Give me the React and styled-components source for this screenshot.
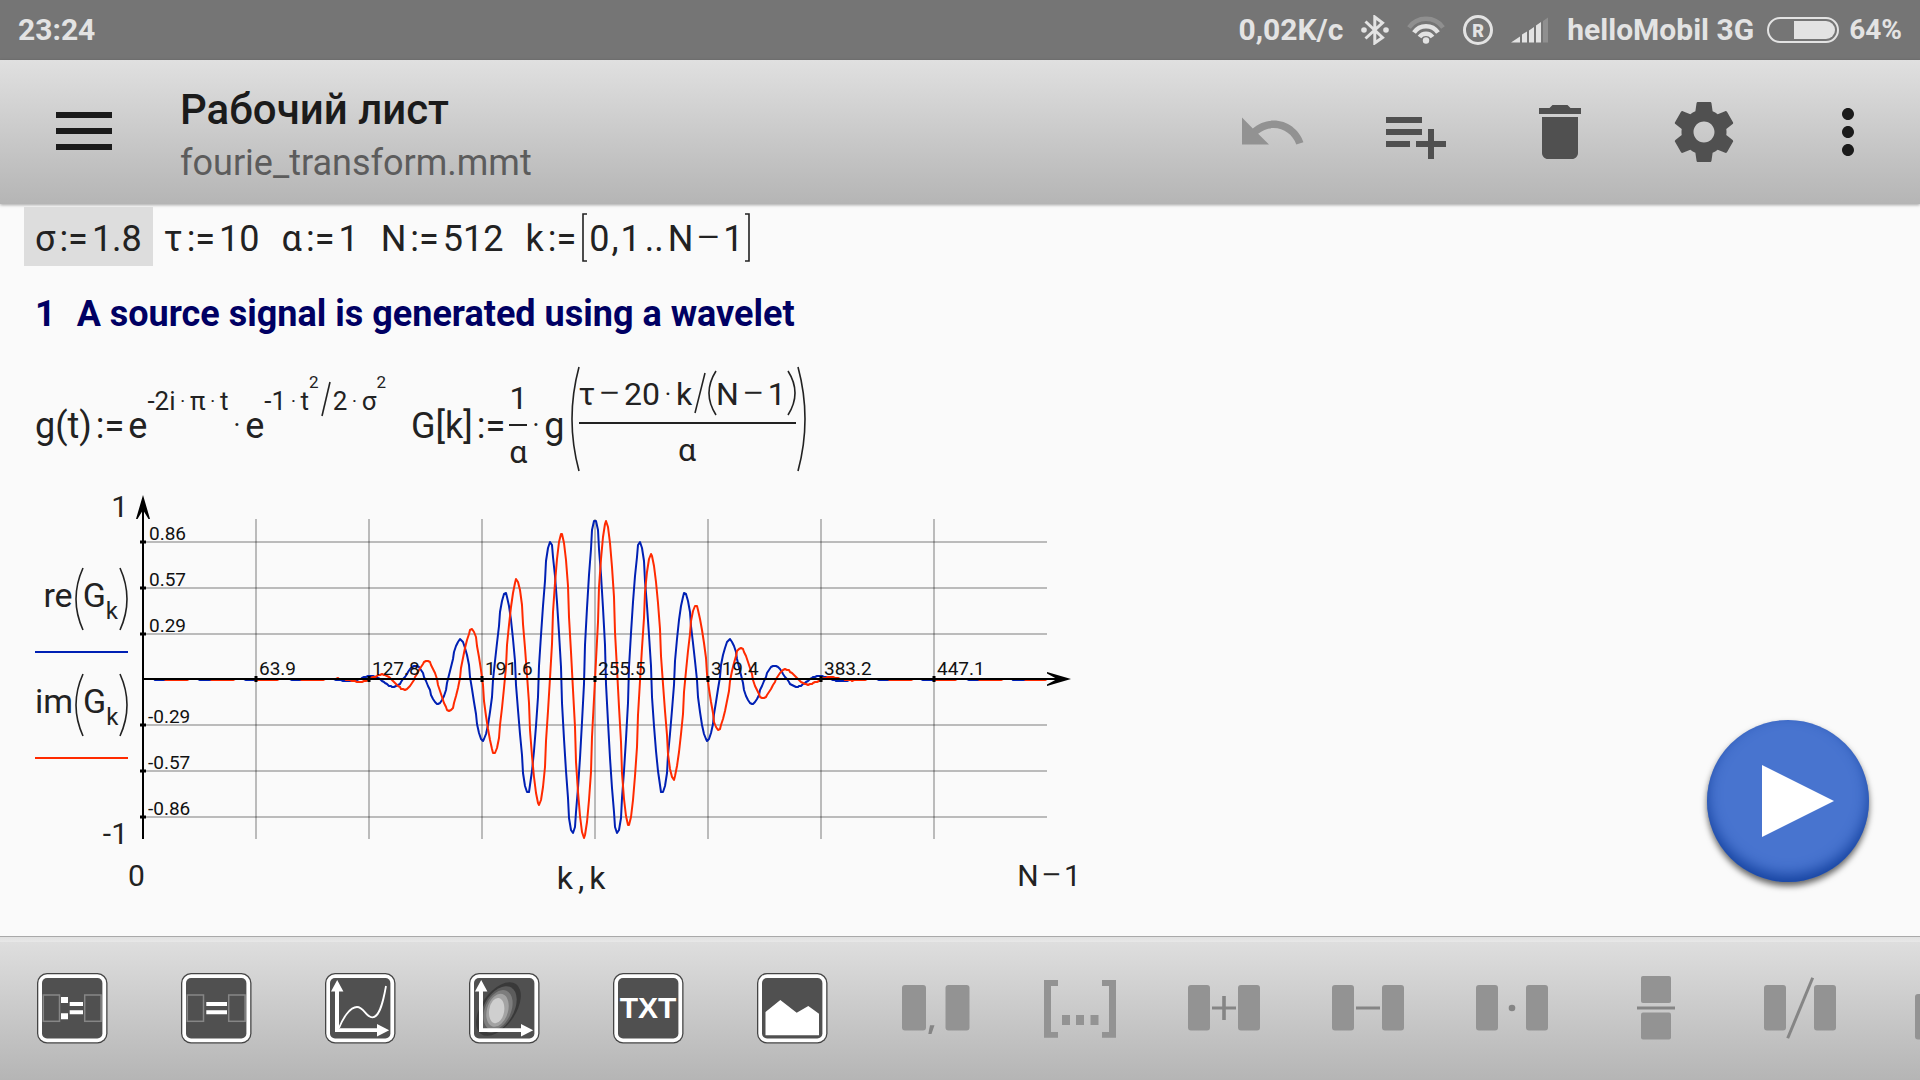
import React from "react";
import styled, { createGlobalStyle } from "styled-components";

const GlobalStyle = createGlobalStyle`
  *, *::before, *::after { box-sizing: border-box; }
  body { margin: 0; background: #fafafa; }
`;

const Screen = styled.div`
  display: flex;
  flex-direction: column;
  min-height: 100vh;
  overflow: hidden;
  font-family: Roboto, "Noto Sans", sans-serif;
  color: #222;
`;

/* ---------- status bar ---------- */

const StatusBar = styled.div`
  display: flex;
  align-items: center;
  justify-content: space-between;
  height: 60px;
  padding: 0 18px;
  background: #757575;
  color: #e3e3e3;
  font-size: 30px;
  font-weight: 700;
  line-height: 60px;
`;

const StatusGroup = styled.div`
  display: flex;
  align-items: center;
  gap: ${(p) => p.$gap}px;
`;

const Percent = styled.span`
  font-size: 28px;
`;

const StatusIcon = styled.svg`
  display: block;
  flex: none;
`;

/* ---------- app bar ---------- */

const AppBar = styled.header`
  display: flex;
  align-items: center;
  height: 144px;
  background: linear-gradient(#e0e0e0, #b5b5b5);
  box-shadow: 0 1px 3px rgba(0, 0, 0, 0.35);
`;

const IconButton = styled.button`
  display: flex;
  flex: none;
  align-items: center;
  justify-content: center;
  width: 144px;
  height: 144px;
  padding: 0;
  border: 0;
  background: none;
  color: ${(p) => (p.$strong ? "#1b1b1b" : "#505050")};
  &:disabled { color: #929292; }
`;

const MenuButton = styled(IconButton)`
  width: 168px;
  padding-bottom: 2px;
`;

const Titles = styled.div`
  flex: 1;
  padding: 8px 0 0 12px;
`;

const Title = styled.h1`
  margin: 0;
  font-size: 42px;
  font-weight: 500;
  line-height: 54px;
  color: #1b1b1b;
`;

const Subtitle = styled.p`
  margin: 0;
  font-size: 36px;
  line-height: 52px;
  color: #5c5c5c;
`;

/* ---------- worksheet ---------- */

const Sheet = styled.main`
  position: relative;
  flex: 1;
  padding: 1px 24px 0;
`;

const FormulaRow = styled.div`
  display: flex;
  align-items: baseline;
  white-space: nowrap;
`;

const Cell = styled.div`
  padding: 9px 11px 3px;
  font-size: 36px;
  line-height: 47px;
  background: ${(p) => (p.$selected ? "#dddddd" : "transparent")};
`;

const Heading = styled.h2`
  display: flex;
  gap: 21px;
  margin: 27px 0 32px;
  padding: 0 11px;
  font-size: 36px;
  font-weight: 700;
  line-height: 42px;
  color: #000063;
`;

const Equations = styled(FormulaRow)`
  gap: 25px;
  padding: 0 11px;
  font-size: 36px;
  line-height: 42px;
`;

const Assign = styled.span`
  margin: 0 4px;
`;

const Operator = styled.span`
  margin: 0 ${(p) => p.$gap || 4}px;
  font-weight: ${(p) => (p.$regular ? 400 : 300)};
`;

const MinusSign = styled.span`
  margin: 0 ${(p) => p.$gap || 2}px;
  font-size: 1.25em;
  font-weight: 300;
  line-height: 0;
  vertical-align: -2px;
`;

const Minus = ({ gap }) => <MinusSign $gap={gap}>−</MinusSign>;

const Raised = styled.span`
  font-size: ${(p) => p.$size}px;
  line-height: ${(p) => p.$size}px;
  vertical-align: ${(p) => p.$by}px;
`;

const Fence = styled.svg`
  display: inline-block;
  width: ${(p) => p.$w || 8}px;
  height: ${(p) => (p.$h ? p.$h + "px" : "auto")};
  margin-left: 2px;
  margin-right: ${(p) => p.$after || 0}px;
  vertical-align: ${(p) => p.$drop || 0}px;
  overflow: visible;
  fill: none;
  stroke: #222;
  stroke-width: 1.6;
  path { vector-effect: non-scaling-stroke; }
`;

const Fraction = styled.span`
  display: inline-flex;
  flex-direction: column;
  align-items: stretch;
  gap: 7px;
  vertical-align: 29px;
  font-size: 32px;
  line-height: 38px;
  text-align: center;
`;

const FractionBar = styled.span`
  height: 2px;
  background: #222;
`;

const Group = styled.span`
  display: inline-flex;
  align-items: stretch;
  margin-left: 4px;
  vertical-align: 33px;
  ${Fraction} { align-self: baseline; padding: 4px 0 2px; }
`;

const FENCES = {
  "(": "M8 0 Q-6 50 8 100",
  ")": "M0 0 Q14 50 0 100",
  "[": "M5 0 H1 V100 H5",
  "]": "M0 0 H4 V100 H0",
};

function Paren({ kind, h, w = 8, drop, after }) {
  return (
    <Fence
      $h={h}
      $w={w}
      $drop={drop}
      $after={after}
      viewBox={kind === "[" || kind === "]" ? "0 0 5 100" : "0 0 8 100"}
      preserveAspectRatio="none"
      aria-hidden="true"
    >
      <path d={FENCES[kind]} />
    </Fence>
  );
}

/* ---------- plot ---------- */

const Figure = styled.figure`
  display: grid;
  grid-template-columns: 93px 944px;
  column-gap: 9px;
  width: max-content;
  margin: 24px 0 0 11px;
`;

const YLabels = styled.div`
  display: flex;
  flex-direction: column;
  align-items: flex-end;
  font-size: 34px;
  line-height: 38px;
`;

const Bound = styled.span`
  font-size: 30px;
  line-height: 24px;
`;

const Legend = styled.div`
  display: flex;
  flex-direction: column;
  gap: 21px;
  width: 100%;
  margin: 49px 0 63px;
`;

const Series = styled.div`
  padding-bottom: 21px;
  border-bottom: 2px solid ${(p) => p.$color};
  text-align: right;
  white-space: nowrap;
`;

const XLabels = styled.figcaption`
  display: flex;
  grid-column: 1 / -1;
  align-items: flex-start;
  justify-content: space-between;
  margin-top: 12px;
  padding-left: 93px;
  font-size: 30px;
  line-height: 36px;
`;

const Variables = styled.span`
  display: flex;
  gap: 5px;
  font-size: 32px;
  line-height: 40px;
`;

const Plot = styled.svg`
  display: block;
  overflow: visible;
  text {
    font-family: Roboto, sans-serif;
    font-size: 19px;
    fill: #111;
  }
`;

const AXIS_X = 6;
const STEP_X = 113;
const WIDTH = 904;
const TOP = 24;
const HALF = 160;
const X_TICKS = ["63.9", "127.8", "191.6", "255.5", "319.4", "383.2", "447.1"];
const Y_TICKS = ["0.86", "0.57", "0.29", "-0.29", "-0.57", "-0.86"];
const Y_LINES = [47, 93, 139, 230, 276, 322];

function wave(fn) {
  let d = "";
  for (let k = 0; k < 512; k += 1) {
    const t = 10 - (20 * k) / 511;
    const v = fn(2 * Math.PI * t) * Math.exp((-t * t) / (2 * 1.8 * 1.8));
    const x = AXIS_X + Math.round((k * WIDTH) / 511);
    const y = TOP + Math.ceil(HALF - HALF * v);
    d += `${k ? "L" : "M"}${x} ${y}`;
  }
  return d;
}

const RE = wave((a) => Math.cos(a));
const IM = wave((a) => -Math.sin(a));

function WaveletPlot() {
  const axisY = TOP + HALF;
  return (
    <Plot width="944" height="345" viewBox="0 0 944 345" role="img" aria-label="re(G), im(G)">
      <g stroke="#000" strokeOpacity="0.25" strokeWidth="2">
        {Y_LINES.map((y) => (
          <path key={y} d={`M${AXIS_X} ${y}H${AXIS_X + WIDTH}`} />
        ))}
        {X_TICKS.map((t, i) => (
          <path key={t} d={`M${AXIS_X + STEP_X * (i + 1)} ${TOP}V${TOP + 2 * HALF}`} />
        ))}
      </g>
      <g fill="none" strokeWidth="2" strokeLinejoin="round">
        <path d={RE} stroke="#0020b4" />
        <path d={IM} stroke="#ff2a00" />
      </g>
      <g stroke="#000" strokeWidth="2">
        <path d={`M${AXIS_X} 4V${TOP + 2 * HALF}`} />
        <path d={`M${AXIS_X} ${axisY}H928`} />
      </g>
      <path d="M6 0L13 24H11.5L6 15L0.5 24H-1Z" />
      <path d="M934 184L910 191V189.5L920 184L910 178.5V177Z" />
      {Y_LINES.map((y) => (
        <rect key={y} x={AXIS_X - 3} y={y - 1.5} width="6" height="3" />
      ))}
      {X_TICKS.map((t, i) => (
        <g key={t}>
          <rect x={AXIS_X + STEP_X * (i + 1) - 1.5} y={axisY - 3} width="3" height="6" />
          <text x={AXIS_X + STEP_X * (i + 1) + 3} y={axisY - 4}>{t}</text>
        </g>
      ))}
      {Y_TICKS.map((t, i) => (
        <text key={t} x={AXIS_X + (i < 3 ? 6 : 5)} y={Y_LINES[i] - 2}>{t}</text>
      ))}
    </Plot>
  );
}

/* ---------- floating button ---------- */

const RunButton = styled.button`
  position: absolute;
  right: 51px;
  bottom: 54px;
  display: flex;
  align-items: center;
  justify-content: center;
  width: 162px;
  height: 162px;
  padding: 0 0 0 20px;
  border: 0;
  border-radius: 50%;
  background: #4874cf;
  box-shadow: inset 0 -7px 14px #1643a0, 0 4px 6px rgba(0, 0, 0, 0.6);
`;

/* ---------- bottom toolbar ---------- */

const Toolbar = styled.nav`
  display: flex;
  flex: none;
  height: 144px;
  overflow: hidden;
  background: linear-gradient(#a9a9a9 0, #a9a9a9 1px, #e0e0e0 1px, #e8e8e8 6px, #dedede 6px, #b5b5b5 100%);
`;

const Tile = ({ children }) => (
  <svg width="72" height="72" viewBox="0 0 72 72" aria-hidden="true">
    <rect x="1" y="1" width="70.5" height="70.5" rx="10" fill="#454545" />
    <rect x="2.3" y="2.3" width="67.9" height="67.9" rx="8.8" fill="#fff" />
    <rect x="6" y="6" width="60.4" height="60.4" rx="5" fill="#505050" />
    {children}
  </svg>
);

const Glyph = ({ children }) => (
  <svg width="72" height="72" viewBox="0 0 72 72" fill="#939393" aria-hidden="true">
    {children}
  </svg>
);

const Slots = () => (
  <g fill="none" stroke="#868686" strokeWidth="1.5">
    <rect x="7.3" y="23" width="16.2" height="26.3" />
    <rect x="48.7" y="23" width="16.4" height="26.3" />
  </g>
);

const Axes = () => (
  <g fill="#fff">
    <path d="M11 60V19.5H7L13.2 8L19.4 19.5H15V56.3H53V52L65.2 58.2L53 64.4V60Z" />
  </g>
);

const Blocks = ({ children }) => (
  <Glyph>
    <rect y="13" width="22" height="45.5" rx="3" />
    <rect x="50" y="13" width="22" height="45.5" rx="3" />
    {children}
  </Glyph>
);

const TOOLS = [
  {
    label: "Assign",
    icon: (
      <Tile>
        <Slots />
        <path fill="#fff" d="M25 25h7v6h-7zM25 41.3h7v6h-7zM33.7 30H47v4H33.7zM33.7 38.3H47v4H33.7z" />
      </Tile>
    ),
  },
  {
    label: "Result",
    icon: (
      <Tile>
        <Slots />
        <path fill="#fff" d="M26.3 30H47v4H26.3zM26.3 38.3H47v4H26.3z" />
      </Tile>
    ),
  },
  {
    label: "Plot",
    icon: (
      <Tile>
        <Axes />
        <path
          fill="none"
          stroke="#fff"
          strokeWidth="1.8"
          d="M15 56C19 46 26 35 33 35C40 35 42 45.3 48.5 45.3C56 45.3 59.5 28 62 14"
        />
      </Tile>
    ),
  },
  {
    label: "Contour plot",
    icon: (
      <Tile>
        <ellipse cx="30.5" cy="37" rx="17" ry="30.5" transform="rotate(35 30.5 37)" fill="#393939" />
        <ellipse cx="30.5" cy="37.5" rx="15" ry="25.5" transform="rotate(30 30.5 37.5)" fill="#5c5c5c" />
        <ellipse cx="30" cy="38" rx="13" ry="21" transform="rotate(24 30 38)" fill="#7d7d7d" />
        <ellipse cx="29.5" cy="38.3" rx="10.5" ry="17" transform="rotate(17 29.5 38.3)" fill="#a3a3a3" />
        <ellipse cx="28.7" cy="38.6" rx="7.5" ry="12.8" transform="rotate(9 28.7 38.6)" fill="#cfcfcf" />
        <Axes />
      </Tile>
    ),
  },
  {
    label: "Text",
    icon: (
      <Tile>
        <text
          x="36"
          y="46"
          textAnchor="middle"
          fontFamily="Liberation Sans, Arial, sans-serif"
          fontSize="30"
          fontWeight="700"
          fill="#fff"
        >
          TXT
        </text>
      </Tile>
    ),
  },
  {
    label: "Image",
    icon: (
      <Tile>
        <path fill="#fff" d="M9.5 63.3V40L24.3 28L40.7 40.7L52.3 34L63 41.7V63.3Z" />
      </Tile>
    ),
  },
  {
    label: "List separator",
    off: true,
    icon: (
      <Glyph>
        <rect x="2" y="13" width="24" height="45.5" rx="3" />
        <rect x="45.5" y="13" width="24" height="45.5" rx="3" />
        <path fill="#858585" d="M30 53.3h4.5L31.5 62h-3.2z" />
      </Glyph>
    ),
  },
  {
    label: "Interval",
    off: true,
    icon: (
      <Glyph>
        <path d="M0 8H14V14H7V60H14V65.7H0ZM72 8H58V14H65V60H58V65.7H72Z" />
        <path d="M18 43h8v10h-8zM32 43h8v10h-8zM46.5 43h8v10h-8z" />
      </Glyph>
    ),
  },
  {
    label: "Add",
    off: true,
    icon: (
      <Blocks>
        <path fill="#858585" d="M24 34.5H34.2V24H37.8V34.5H48V37.5H37.8V48H34.2V37.5H24Z" />
      </Blocks>
    ),
  },
  {
    label: "Subtract",
    off: true,
    icon: (
      <Blocks>
        <path fill="#858585" d="M24 34.5H48V37.5H24Z" />
      </Blocks>
    ),
  },
  {
    label: "Multiply",
    off: true,
    icon: (
      <Blocks>
        <circle fill="#858585" cx="36" cy="36" r="3.3" />
      </Blocks>
    ),
  },
  {
    label: "Fraction",
    off: true,
    icon: (
      <Glyph>
        <rect x="21" y="4" width="30" height="27" rx="2" />
        <rect x="21" y="40.5" width="30" height="27" rx="2" />
        <path fill="#858585" d="M17 34.5H55V37.5H17Z" />
      </Glyph>
    ),
  },
  {
    label: "Divide",
    off: true,
    icon: (
      <Blocks>
        <path stroke="#858585" strokeWidth="3" d="M23.7 66.3L48.7 5.7" />
      </Blocks>
    ),
  },
  {
    label: "Brackets",
    off: true,
    icon: (
      <Glyph>
        <rect x="7" y="22" width="22" height="45.5" rx="3" />
      </Glyph>
    ),
  },
];

const ActionIcon = ({ d }) => (
  <svg width="72" height="72" viewBox="0 0 24 24" fill="currentColor" aria-hidden="true">
    <path d={d} />
  </svg>
);

export default function App() {
  return (
    <Screen>
      <GlobalStyle />
      <StatusBar>
        <span>23:24</span>
        <StatusGroup $gap={18}>
          <span>0,02K/c</span>
          <StatusIcon width="28" height="30" viewBox="0 0 28 30" aria-label="Bluetooth">
            <path
              fill="none"
              stroke="#e3e3e3"
              strokeWidth="3"
              d="M4.5 6.5L21.5 22.5L13.8 28V2L21.5 7.8L4.5 23.5"
            />
            <circle cx="3" cy="15" r="2.8" fill="#e3e3e3" />
            <circle cx="25" cy="15" r="2.8" fill="#e3e3e3" />
          </StatusIcon>
          <StatusIcon width="38" height="30" viewBox="0 0 38 30" fill="none" strokeWidth="4.5" aria-label="Wi-Fi">
            <path stroke="#8f8f8f" d="M2 12.5A21 21 0 0 1 36 12.5" />
            <path stroke="#e3e3e3" d="M7 17.5A14.5 14.5 0 0 1 31 17.5" />
            <path stroke="#e3e3e3" d="M12.5 22A8 8 0 0 1 25.5 22" />
            <circle cx="19" cy="25.5" r="3.2" fill="#e3e3e3" />
          </StatusIcon>
          <StatusIcon width="30" height="30" viewBox="0 0 30 30" aria-label="Roaming">
            <circle cx="15" cy="15" r="13.5" fill="none" stroke="#e3e3e3" strokeWidth="3" />
            <text
              x="15"
              y="21.5"
              textAnchor="middle"
              fontFamily="Roboto, sans-serif"
              fontSize="18"
              fontWeight="900"
              fill="#e3e3e3"
            >
              R
            </text>
          </StatusIcon>
          <StatusIcon width="38" height="26" viewBox="0 0 38 26" aria-label="Signal">
            <path fill="#e3e3e3" d="M0 25.5L9 19.5V25.5ZM11 25.5V17.5L16 14.5V25.5ZM18 25.5V13.5L23 10V25.5ZM25 25.5V8.5L30 5V25.5Z" />
            <path fill="#8f8f8f" d="M32 25.5V4L37 0.5V25.5Z" />
          </StatusIcon>
          <StatusGroup $gap={13}>
            <span>helloMobil 3G</span>
            <StatusGroup $gap={10}>
              <StatusIcon width="72" height="26" viewBox="0 0 72 26" aria-label="Battery">
                <rect x="1" y="1" width="70" height="24" rx="12" fill="none" stroke="#e3e3e3" strokeWidth="2" />
                <path fill="#e3e3e3" d="M27 4H59A9 9 0 0 1 59 22H27Z" />
              </StatusIcon>
              <Percent>64%</Percent>
            </StatusGroup>
          </StatusGroup>
        </StatusGroup>
      </StatusBar>

      <AppBar>
        <MenuButton $strong aria-label="Меню">
          <svg width="56" height="38" viewBox="0 0 56 38" fill="currentColor" aria-hidden="true">
            <path d="M0 0H56V6H0ZM0 16H56V22H0ZM0 32H56V38H0Z" />
          </svg>
        </MenuButton>
        <Titles>
          <Title>Рабочий лист</Title>
          <Subtitle>fourie_transform.mmt</Subtitle>
        </Titles>
        <IconButton disabled aria-label="Undo">
          <ActionIcon d="M12.5 8.2c-2.65 0-5.05.99-6.9 2.6L2 7.2v9h9l-3.62-3.62c1.39-1.16 3.16-1.88 5.12-1.88 3.54 0 6.55 2.31 7.6 5.5l2.37-.78C21.08 11.23 17.15 8.2 12.5 8.2z" />
        </IconButton>
        <IconButton aria-label="Add element">
          <ActionIcon d="M14 11H2v2h12v-2zm0-4H2v2h12V7zm4 8v-4h-2v4h-4v2h4v4h2v-4h4v-2h-4zM2 17h8v-2H2v2z" />
        </IconButton>
        <IconButton aria-label="Delete">
          <ActionIcon d="M6 19c0 1.1.9 2 2 2h8c1.1 0 2-.9 2-2V7H6v12zM19 4h-3.5l-1-1h-5l-1 1H5v2h14V4z" />
        </IconButton>
        <IconButton aria-label="Settings">
          <ActionIcon d="M19.43 12.98c.04-.32.07-.64.07-.98s-.03-.66-.07-.98l2.11-1.65c.19-.15.24-.42.12-.64l-2-3.46c-.12-.22-.39-.3-.61-.22l-2.49 1c-.52-.4-1.08-.73-1.69-.98l-.38-2.65C14.46 2.18 14.25 2 14 2h-4c-.25 0-.46.18-.49.42l-.38 2.65c-.61.25-1.17.59-1.69.98l-2.49-1c-.23-.09-.49 0-.61.22l-2 3.46c-.13.22-.07.49.12.64l2.11 1.65c-.04.32-.07.65-.07.98s.03.66.07.98l-2.11 1.65c-.19.15-.24.42-.12.64l2 3.46c.12.22.39.3.61.22l2.49-1c.52.4 1.08.73 1.69.98l.38 2.65c.03.24.24.42.49.42h4c.25 0 .46-.18.49-.42l.38-2.65c.61-.25 1.17-.59 1.69-.98l2.49 1c.23.09.49 0 .61-.22l2-3.46c.12-.22.07-.49-.12-.64l-2.11-1.65zM12 15.5c-1.93 0-3.5-1.57-3.5-3.5s1.57-3.5 3.5-3.5 3.5 1.57 3.5 3.5-1.57 3.5-3.5 3.5z" />
        </IconButton>
        <IconButton $strong aria-label="More">
          <ActionIcon d="M12 8c1.1 0 2-.9 2-2s-.9-2-2-2-2 .9-2 2 .9 2 2 2zm0 2c-1.1 0-2 .9-2 2s.9 2 2 2 2-.9 2-2-.9-2-2-2zm0 6c-1.1 0-2 .9-2 2s.9 2 2 2 2-.9 2-2-.9-2-2-2z" />
        </IconButton>
      </AppBar>

      <Sheet>
        <FormulaRow>
          <Cell $selected>
            σ<Assign>:=</Assign>1.8
          </Cell>
          <Cell>
            τ<Assign>:=</Assign>10
          </Cell>
          <Cell>
            α<Assign>:=</Assign>1
          </Cell>
          <Cell>
            N<Assign>:=</Assign>512
          </Cell>
          <Cell>
            k<Assign>:=</Assign>
            <Paren kind="[" w={5} h={47} drop={-10} after={2} />
            0<Operator $regular $gap={2}>,</Operator>1
            <Operator $regular>..</Operator>N
            <Minus />1
            <Paren kind="]" w={5} h={47} drop={-10} />
          </Cell>
        </FormulaRow>

        <Heading>
          <span>1</span>
          <span>A source signal is generated using a wavelet</span>
        </Heading>

        <Equations>
          <span>
            g(t)<Assign>:=</Assign>e
            <Raised $size={26} $by={28}>
              -2i<Operator>·</Operator>π<Operator>·</Operator>t
            </Raised>
            <Operator>·</Operator>e
            <Raised $size={26} $by={28}>
              -1<Operator>·</Operator>t
              <Raised $size={17} $by={22}>2</Raised>
              <Fence $w={10} $h={34} $drop={-6} $after={2} viewBox="0 0 10 34" aria-hidden="true">
                <path d="M1 34L9 0" />
              </Fence>
              2<Operator>·</Operator>σ
              <Raised $size={17} $by={22}>2</Raised>
            </Raised>
          </span>
          <span>
            G[k]<Assign>:=</Assign>
            <Fraction>
              <span>1</span>
              <FractionBar />
              <span>α</span>
            </Fraction>
            <Operator>·</Operator>g
            <Group>
              <Paren kind="(" />
              <Fraction>
                <span>
                  τ<Minus gap={3} />20<Operator>·</Operator>k
                  <Fence $w={12} $h={40} $drop={-8} viewBox="0 0 12 40" aria-hidden="true">
                    <path d="M1 40L11 0" />
                  </Fence>
                  <Paren kind="(" h={44} drop={-10} />
                  N<Minus gap={3} />1
                  <Paren kind=")" h={44} drop={-10} />
                </span>
                <FractionBar />
                <span>α</span>
              </Fraction>
              <Paren kind=")" />
            </Group>
          </span>
        </Equations>

        <Figure>
          <YLabels>
            <Bound>1</Bound>
            <Legend>
              <Series $color="#0020b4">
                re
                <Paren kind="(" h={62} drop={-23} />
                G<Raised $size={24} $by={-12}>k</Raised>
                <Paren kind=")" h={62} drop={-23} />
              </Series>
              <Series $color="#ff2a00">
                im
                <Paren kind="(" h={62} drop={-23} />
                G<Raised $size={24} $by={-12}>k</Raised>
                <Paren kind=")" h={62} drop={-23} />
              </Series>
            </Legend>
            <Bound>-1</Bound>
          </YLabels>
          <WaveletPlot />
          <XLabels>
            <span>0</span>
            <Variables>
              <span>k</span>
              <span>,</span>
              <span>k</span>
            </Variables>
            <span>
              N<Minus />1
            </span>
          </XLabels>
        </Figure>

        <RunButton aria-label="Run">
          <svg width="72" height="72" viewBox="0 0 72 72" fill="#fff" aria-hidden="true">
            <path d="M0 0L72 36L0 72Z" />
          </svg>
        </RunButton>
      </Sheet>

      <Toolbar>
        {TOOLS.map((tool) => (
          <IconButton key={tool.label} disabled={tool.off} aria-label={tool.label}>
            {tool.icon}
          </IconButton>
        ))}
      </Toolbar>
    </Screen>
  );
}
